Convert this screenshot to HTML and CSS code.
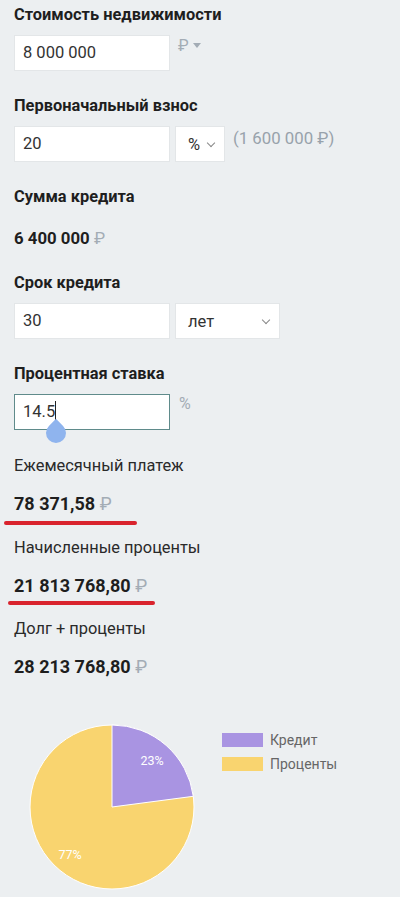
FILE: index.html
```html
<!DOCTYPE html>
<html lang="ru">
<head>
<meta charset="utf-8">
<link rel="stylesheet" href="styles.css">
</head>
<body>
<div class="page">
  <div class="label first">Стоимость недвижимости</div>
  <div class="row">
    <div class="input w155">8 000 000</div>
    <div class="cur">₽<span class="tri"></span></div>
  </div>

  <div class="label">Первоначальный взнос</div>
  <div class="row">
    <div class="input w155">20</div>
    <div class="select w49"><span>%</span><span class="chev"></span></div>
    <div class="hint">(1 600 000 ₽)</div>
  </div>

  <div class="label">Сумма кредита</div>
  <div class="value small">6 400 000 <span class="rub">₽</span></div>

  <div class="label">Срок кредита</div>
  <div class="row">
    <div class="input w155">30</div>
    <div class="select w104"><span>лет</span><span class="chev"></span></div>
  </div>

  <div class="label">Процентная ставка</div>
  <div class="row">
    <div class="input w155 focus">14.5<span class="caret"></span><span class="handle"></span></div>
    <div class="cur pct">%</div>
  </div>

  <div class="rlabel">Ежемесячный платеж</div>
  <div class="value">78 371,58 <span class="rub">₽</span></div>
  <div class="redline l1"></div>

  <div class="rlabel">Начисленные проценты</div>
  <div class="value">21 813 768,80 <span class="rub">₽</span></div>
  <div class="redline l2"></div>

  <div class="rlabel r3">Долг + проценты</div>
  <div class="value">28 213 768,80 <span class="rub">₽</span></div>

  <div class="chart">
    <svg class="pie" width="166" height="166" viewBox="0 0 166 166">
      <circle cx="83" cy="83" r="82" fill="#f9d46f" stroke="#ffffff" stroke-width="1"/>
      <path d="M83 83 L83 1 A82 82 0 0 1 164.3 72.3 Z" fill="#a994e2" stroke="#ffffff" stroke-width="1"/>
      <text x="123" y="41" class="pt" text-anchor="middle">23%</text>
      <text x="41" y="135" class="pt" text-anchor="middle">77%</text>
    </svg>
    <div class="legend">
      <div class="li"><span class="sw purple"></span>Кредит</div>
      <div class="li"><span class="sw yellow"></span>Проценты</div>
    </div>
  </div>
</div>
</body>
</html>
```

FILE: styles.css
```css
html, body {
  margin: 0;
  padding: 0;
}
body {
  background: #eceff1;
  font-family: Roboto, "Liberation Sans", sans-serif;
  color: #222;
  width: 400px;
  height: 897px;
  overflow: hidden;
}
.page {
  padding: 5px 0 0 14px;
}
.label {
  font-weight: 700;
  font-size: 16.4px;
  line-height: 20px;
  height: 20px;
  margin-top: 25px;
  color: #1e1e1e;
}
.label.first {
  margin-top: 0;
}
.row {
  display: flex;
  align-items: flex-start;
  margin-top: 10px;
  height: 36px;
}
.input {
  box-sizing: border-box;
  height: 36px;
  background: #fff;
  border: 1px solid #e3e6e8;
  font-size: 16.5px;
  line-height: 34px;
  padding-left: 8px;
  color: #333;
  position: relative;
}
.w155 { width: 156px; }
.input.focus {
  border-color: #5f8b8b;
}
.caret {
  display: inline-block;
  width: 1px;
  height: 20px;
  background: #222;
  vertical-align: -4px;
}
.handle {
  position: absolute;
  left: 31px;
  top: 28px;
  width: 20px;
  height: 20px;
  background: #8fb4ee;
  border-radius: 0 50% 50% 50%;
  transform: rotate(45deg);
}
.select {
  box-sizing: border-box;
  height: 36px;
  background: #fff;
  border: 1px solid #e3e6e8;
  margin-left: 5px;
  display: flex;
  align-items: center;
  justify-content: space-between;
  padding: 0 10px 0 12px;
  font-size: 16.5px;
  color: #333;
}
.w49 { width: 50px; }
.w104 { width: 105px; padding-left: 12px; }
.chev {
  width: 5px;
  height: 5px;
  border-right: 1px solid #888;
  border-bottom: 1px solid #888;
  transform: rotate(45deg);
  margin-top: -3px;
}
.cur {
  margin-left: 8px;
  font-size: 16px;
  color: #a3acb5;
  line-height: 22px;
  display: flex;
  align-items: center;
}
.cur.pct {
  line-height: 20px;
  margin-left: 9px;
}
.tri {
  width: 0;
  height: 0;
  border-left: 4px solid transparent;
  border-right: 4px solid transparent;
  border-top: 5px solid #a3acb5;
  margin-left: 4px;
  margin-top: -2px;
}
.hint {
  margin-left: 8px;
  font-size: 16.8px;
  color: #98a2ab;
  line-height: 24px;
}
.value {
  font-weight: 700;
  font-size: 18px;
  line-height: 20px;
  height: 20px;
  margin-top: 18px;
  color: #1e1e1e;
}
.value.small {
  font-size: 16.8px;
  margin-top: 21px;
}
.rub {
  font-weight: 400;
  color: #a3acb5;
}
.rlabel {
  font-size: 16.4px;
  line-height: 20px;
  height: 20px;
  margin-top: 26px;
  color: #2a2a2a;
}
.redline {
  height: 4px;
  background: #d9232d;
  border-radius: 2px;
}
.l1 {
  width: 133px;
  margin-left: -10px;
  margin-top: 7px;
  margin-bottom: -4px;
}
.l1 + .rlabel { margin-top: 17px; }
.l2 {
  width: 147px;
  margin-left: -6px;
  margin-top: 5px;
  margin-bottom: -4px;
}
.l2 + .rlabel { margin-top: 18px; }
.chart {
  display: flex;
  align-items: flex-start;
  margin-top: 47px;
  margin-left: 15px;
}
.pie {
  display: block;
}
.pt {
  font-family: Roboto, "Liberation Sans", sans-serif;
  font-size: 12.5px;
  fill: #ffffff;
}
.legend {
  margin-left: 27px;
  margin-top: 9px;
}
.li {
  display: flex;
  align-items: center;
  font-size: 14px;
  color: #666;
  height: 14px;
  margin-bottom: 10px;
}
.sw {
  width: 41px;
  height: 14px;
  margin-right: 7px;
}
.purple { background: #a994e2; }
.yellow { background: #f9d46f; }
```
